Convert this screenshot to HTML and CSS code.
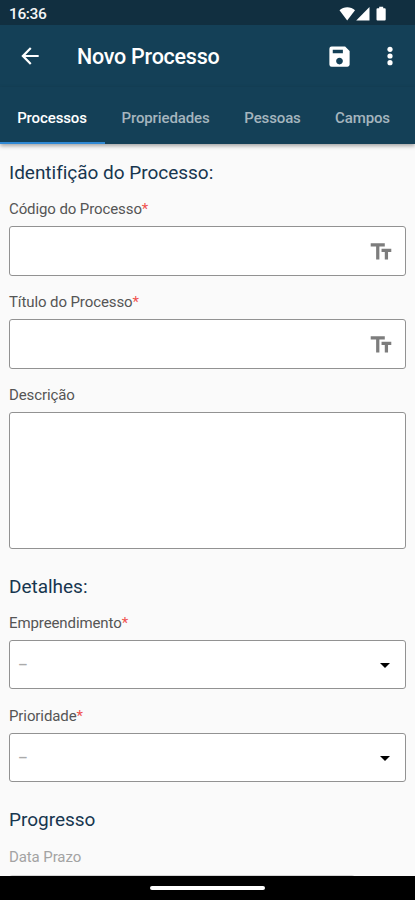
FILE: index.html
```html
<!DOCTYPE html>
<html lang="pt-BR">
<head>
<meta charset="utf-8">
<meta name="viewport" content="width=device-width, initial-scale=1">
<title>Novo Processo</title>
<link rel="stylesheet" href="styles.css">
</head>
<body>
<div class="screen">
  <div class="status-bar">
    <span class="clock">16:36</span>
    <svg class="status-icons" width="48" height="16" viewBox="0 0 48 16" fill="#fff">
      <path d="M0.500 4.200C4.500.3 12 .3 16 4.200L8.200 14.600Z"/>
      <path d="M30.500 1V14.400H17.200Z"/>
      <path d="M38.500 2.300h1.700V.8h4v1.500h1.500q1 0 1 1V13.400q0 1-1 1h-7.200q-1 0-1-1V3.300q0-1 1-1z"/>
    </svg>
  </div>
  <header class="app-bar">
    <svg class="back" width="26" height="26" viewBox="0 0 24 24" fill="#fff"><path d="M20 11H7.830l5.590-5.590L12 4l-8 8 8 8 1.410-1.410L7.830 13H20v-2z"/></svg>
    <h1 class="title">Novo Processo</h1>
    <svg class="save" width="27" height="27" viewBox="0 0 24 24" fill="#fff"><path d="M17 3H5a2 2 0 0 0-2 2v14a2 2 0 0 0 2 2h14c1.100 0 2-.9 2-2V7l-4-4zm-5 16c-1.660 0-3-1.340-3-3s1.340-3 3-3 3 1.340 3 3-1.340 3-3 3zm3-10H6V6h9v3z"/></svg>
    <svg class="more" width="26" height="26" viewBox="0 0 24 24" fill="#fff"><circle cx="12" cy="5.800" r="2.400"/><circle cx="12" cy="12" r="2.400"/><circle cx="12" cy="18.200" r="2.400"/></svg>
  </header>
  <nav class="tabs">
    <span class="tab tab-active">Processos</span>
    <span class="tab">Propriedades</span>
    <span class="tab">Pessoas</span>
    <span class="tab">Campos</span>
  </nav>
  <main class="form">
    <h2 class="section">Identifição do Processo:</h2>
    <div class="label">Código do Processo<b>*</b></div>
    <div class="field"><svg width="26" height="26" viewBox="0 0 24 24"><path d="M2.500 4v3h5v12h3V7h5V4h-13zm19 5h-9v3h3v7h3v-7h3V9z"/></svg></div>
    <div class="label">Título do Processo<b>*</b></div>
    <div class="field"><svg width="26" height="26" viewBox="0 0 24 24"><path d="M2.500 4v3h5v12h3V7h5V4h-13zm19 5h-9v3h3v7h3v-7h3V9z"/></svg></div>
    <div class="label">Descrição</div>
    <div class="field area"></div>
    <h2 class="section second">Detalhes:</h2>
    <div class="label">Empreendimento<b>*</b></div>
    <div class="field select"><span class="dash">–</span><i class="caret"></i></div>
    <div class="label">Prioridade<b>*</b></div>
    <div class="field select"><span class="dash">–</span><i class="caret"></i></div>
    <h2 class="section third">Progresso</h2>
    <div class="label muted">Data Prazo</div>
    <div class="field date"></div>
  </main>
  <footer class="nav-bar"><span class="handle"></span></footer>
</div>
</body>
</html>
```
FILE: styles.css
```css
* { box-sizing: border-box; }
body { margin: 0; font-family: Roboto, "Liberation Sans", sans-serif; }
.screen { width: 415px; height: 900px; display: flex; flex-direction: column; overflow: hidden; background: #fafafa; }
.status-bar { flex: none; height: 25px; display: flex; align-items: center; justify-content: space-between; padding: 2px 28px 0 9px; background: #112f40; color: #f4f6f7; }
.clock { font-size: 15.5px; font-weight: 500; letter-spacing: -0.4px; }
.app-bar { flex: none; height: 62px; display: flex; align-items: center; padding: 0 12px 0 17px; background: #144057; }
.title { margin: 0 0 0 34px; flex: 1; font-size: 21.5px; font-weight: 500; color: #fff; letter-spacing: -0.25px; white-space: nowrap; }
.save { margin-right: 24px; }
.tabs { flex: none; position: relative; z-index: 1; height: 57px; display: grid; grid-template-columns: 104px 123px 91px 89px; background: linear-gradient(#3089d4, #3089d4) 0 100% / 105px 2px no-repeat #144057; box-shadow: 0 2px 4px rgba(0,0,0,.35); }
.tab { display: flex; align-items: center; justify-content: center; padding: 6px 0 2px; color: #a5b5be; font-size: 15px; font-weight: 500; letter-spacing: -0.12px; }
.tab-active { color: #fff; }
.form { flex: 1; min-height: 0; overflow: hidden; padding: 15px 9px 0; }
.section { margin: 0 0 12px; height: 28px; line-height: 28px; font-size: 19px; font-weight: 400; color: #17364f; letter-spacing: -0.02px; }
.label { height: 20px; line-height: 20px; margin-bottom: 7px; font-size: 15px; color: #555; letter-spacing: -0.1px; }
.label b { color: #f0524f; font-weight: 400; }
.field { height: 50px; margin-bottom: 16px; display: flex; align-items: center; justify-content: flex-end; padding: 0 11px; border: 1px solid #929292; border-radius: 3px; background: #fff; }
.field svg { fill: #7d7d7d; margin-top: 1px; }
.area { height: 137px; margin-bottom: 0; }
.second { margin: 24px 0 12px; }
.select { height: 49px; justify-content: space-between; padding: 0 15px 0 8px; margin-bottom: 17px; }
.dash { color: #aaa; font-size: 15px; font-weight: 500; }
.caret { margin-top: 1px; border: 5px solid transparent; border-top-color: #000; border-bottom: 0; }
.third { margin: 24px 0 13px; }
.muted { color: #a3a3a3; margin-bottom: 8px; }
.date { width: 346px; border-color: #d5d5d5; }
.nav-bar { flex: none; height: 24px; display: flex; justify-content: center; align-items: center; background: #000; }
.handle { width: 115px; height: 4px; border-radius: 2px; background: #fff; }
```
